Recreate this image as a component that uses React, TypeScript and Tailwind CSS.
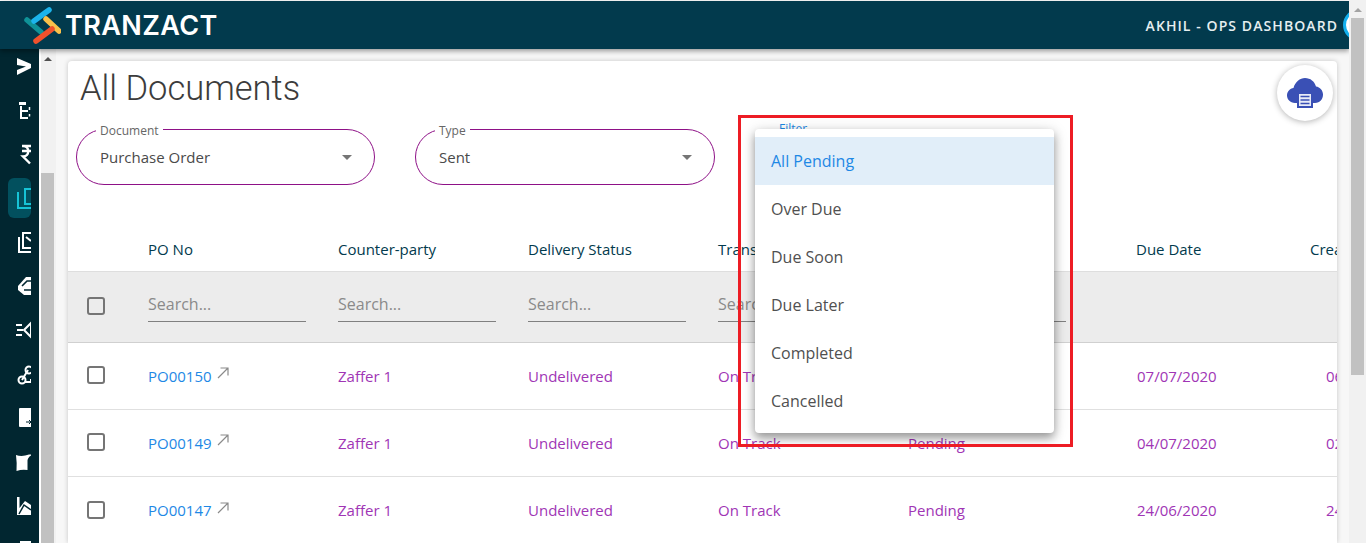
import React from "react";

const FONT = "font-['Open_Sans',sans-serif]";

function Logo() {
  return (
    <svg width="38" height="40" viewBox="0 0 38 40" fill="none" strokeLinecap="round" className="shrink-0">
      <path d="M4 15 L18 27" stroke="#0f9298" strokeWidth="5.5" />
      <path d="M11 16 L26 5" stroke="#1cb4ec" strokeWidth="5.5" />
      <path d="M23 14 L36 26" stroke="#f9c04a" strokeWidth="5.5" />
      <path d="M13 36 L29 24" stroke="#f0512c" strokeWidth="5.5" />
    </svg>
  );
}

function SideIcon({ children, active }: { children: React.ReactNode; active?: boolean }) {
  return (
    <div className="flex h-[44px] shrink-0 items-center">
      <div className={`relative h-[40px] w-[23px] overflow-hidden ${active ? "rounded-md bg-[#02505e]" : ""}`}>
        <svg width="32" height="40" viewBox="0 0 32 40" className="absolute left-0 top-0" fill="none">
          {children}
        </svg>
      </div>
    </div>
  );
}

function Sidebar() {
  const w = "#ffffff";
  const d = "#012630";
  return (
    <div className="flex h-full w-[39px] shrink-0 flex-col overflow-hidden bg-[#012630] pl-[8px]">
      <div className="mt-[-5px]" />
      <SideIcon>
        <path d="M9 12 L23 18 V22 L9 29 V24 L18 20.5 L9 19 Z" fill={w} />
      </SideIcon>
      <SideIcon>
        <path d="M11 12 H18 V15 H11 Z" fill={w} />
        <path d="M13 16 V28 H20 M13 21 H20" stroke={w} strokeWidth="2" />
        <path d="M21.5 17 V20 M21.5 24 V26.5" stroke={w} strokeWidth="1.5" />
      </SideIcon>
      <SideIcon>
        <path d="M14 12 H23 M14 17 H23 M15 12 C22 12 22 22.5 15 22.5 L22 29.5" stroke={w} strokeWidth="2.4" />
      </SideIcon>
      <SideIcon active>
        <path d="M10 14 V30 H23" stroke="#17c3d6" strokeWidth="2" />
        <path d="M17 11 H30 V26 H17 Z" stroke="#17c3d6" strokeWidth="2" />
      </SideIcon>
      <SideIcon>
        <path d="M11 15 V30 H23" stroke={w} strokeWidth="2" />
        <path d="M15 11 H27 V26 H15 Z" stroke={w} strokeWidth="2" />
        <path d="M18 15 L23 19" stroke={w} strokeWidth="2" />
      </SideIcon>
      <SideIcon>
        <path d="M10 20 L18 11 H23 V29 H16 L10 24 Z" fill={w} />
        <path d="M14 20 L19 15 H23 M16 24 H23" stroke={d} strokeWidth="1.6" />
      </SideIcon>
      <SideIcon>
        <path d="M8 15 H14 M9 20 H15 M8 25 H14" stroke={w} strokeWidth="1.8" />
        <path d="M16 20 L23 13 V27 Z" stroke={w} strokeWidth="2" />
      </SideIcon>
      <SideIcon>
        <circle cx="14" cy="26" r="3.5" stroke={w} strokeWidth="2" />
        <circle cx="21" cy="16" r="3.5" stroke={w} strokeWidth="2" />
        <path d="M14 26 L20 16 M17 28 H23 M23 25 V29" stroke={w} strokeWidth="2" />
      </SideIcon>
      <SideIcon>
        <path d="M12 10 H23 V29 H12 Q11 29 11 28 V11 Q11 10 12 10 Z" fill={w} />
        <path d="M18 24 H23 M21 22 L23 24 L21 26" stroke={d} strokeWidth="1" />
      </SideIcon>
      <SideIcon>
        <path d="M8 13 Q14 15 21 12.5 H23 V13.5 Q19 16 19.5 20 V28 Q14 27 8.5 29 Q9 20 8 13 Z" fill={w} />
      </SideIcon>
      <SideIcon>
        <path d="M9 11 H11.5 V22 L17 15 L23 19 V29 H9 Z" fill={w} />
        <path d="M11 28 L16 19 L23 24" stroke={d} strokeWidth="1.5" />
      </SideIcon>
      <SideIcon>
        <path d="M12 11 H23 V30 H12 Z" fill={w} />
      </SideIcon>
    </div>
  );
}

function Field({ label, value, className }: { label: string; value: string; className: string }) {
  return (
    <div className={`relative flex h-[56px] items-center justify-between rounded-[28px] border border-[#8e1187] pl-[23px] pr-[22px] ${className}`}>
      <span className="absolute left-[19px] top-[-6px] bg-white px-[4px] text-[12px] leading-[14px] text-[#666666]">{label}</span>
      <span className="text-[15px] text-[#4a4a4a]">{value}</span>
      <span className="mt-[1px] h-0 w-0 border-x-[5px] border-t-[5px] border-x-transparent border-t-[#757575]" />
    </div>
  );
}

const COLS = ["w-[190px]", "w-[190px]", "w-[190px]", "w-[190px]", "w-[228px]", "w-[190px]"];

function Checkbox() {
  return <span className="mt-[-2px] block h-[18px] w-[18px] rounded-[3px] border-2 border-[#757575]" />;
}

function Search() {
  return (
    <div className="flex h-[34px] w-[158px] items-center border-b border-[#808080] pb-[2px] text-[16px] text-[#8a8a8a]">Search...</div>
  );
}

function Row({ cells, last }: { cells: string[]; last?: boolean }) {
  return (
    <div className={`flex h-[67px] shrink-0 items-center text-[15px] text-[#a035b5] ${last ? "" : "border-b border-[#e0e0e0]"}`}>
      <div className="w-[80px] shrink-0 pl-[19px]"><Checkbox /></div>
      <div className={`${COLS[0]} flex shrink-0 items-center text-[#1e88e5]`}>
        <span>{cells[0]}</span>
        <svg width="12" height="12" viewBox="0 0 12 12" fill="none" stroke="#8a8a8a" strokeWidth="1.2" className="ml-[5px] mt-[-6px]">
          <path d="M1 11 L11 1 M3.5 1 H11 V8.5" />
        </svg>
      </div>
      {cells.slice(1).map((c, i) => (
        <div key={i} className={`${COLS[i + 1]} shrink-0 ${i === 4 ? "pl-[1px]" : ""}`}>{c}</div>
      ))}
    </div>
  );
}

function Table() {
  const heads = ["PO No", "Counter-party", "Delivery Status", "Transaction Status", "Status", "Due Date", "Created"];
  return (
    <div className="mt-[41px] flex flex-col overflow-hidden">
      <div className="flex h-[46px] shrink-0 items-center border-b border-[#dedede] pl-[80px] pt-[2px] text-[15px] font-medium text-[#023a4d]">
        {heads.map((h, i) => (
          <div key={h} className={`${i === 4 ? "w-[228px]" : i === 5 ? "w-[174px]" : "w-[190px]"} shrink-0 whitespace-nowrap`}>{h}</div>
        ))}
      </div>
      <div className="flex h-[71px] shrink-0 items-center border-b border-[#d0d0d0] bg-[#ececec]">
        <div className="w-[80px] shrink-0 pl-[19px]"><Checkbox /></div>
        {[0, 1, 2, 3, 4].map((i) => (
          <div key={i} className={`${COLS[i]} mt-[-4px] shrink-0`}><Search /></div>
        ))}
      </div>
      <Row cells={["PO00150", "Zaffer 1", "Undelivered", "On Track", "Pending", "07/07/2020", "06/07/2020"]} />
      <Row cells={["PO00149", "Zaffer 1", "Undelivered", "On Track", "Pending", "04/07/2020", "02/07/2020"]} />
      <Row last cells={["PO00147", "Zaffer 1", "Undelivered", "On Track", "Pending", "24/06/2020", "24/06/2020"]} />
    </div>
  );
}

function Menu() {
  const items = ["All Pending", "Over Due", "Due Soon", "Due Later", "Completed", "Cancelled"];
  return (
    <div className="absolute left-[755px] top-[129px] z-10 w-[299px] rounded-[4px] bg-white py-[8px] shadow-[0_5px_10px_rgba(0,0,0,0.35),0_2px_16px_rgba(0,0,0,0.14)]">
      {items.map((t, i) => (
        <div key={t} className={`flex h-[48px] items-center pl-[16px] text-[16px] ${i === 0 ? "bg-[#e1eef9] text-[#1e88e5]" : "text-[#505050]"}`}>{t}</div>
      ))}
    </div>
  );
}

export default function App() {
  return (
    <div className={`relative flex h-[543px] w-[1366px] overflow-hidden bg-white ${FONT}`}>
      <div className="flex min-w-0 flex-1 flex-col pt-[1px]">
        <header className="relative z-[5] flex h-[48px] shrink-0 items-center overflow-hidden bg-[#023a4d] pl-[23px] shadow-[0_2px_5px_rgba(0,0,0,0.4)]">
          <Logo />
          <span className="ml-[4px] font-['Inter',sans-serif] text-[27px] font-semibold leading-none tracking-[0.4px] text-white">TRANZACT</span>
          <div className="ml-auto flex items-center">
            <span className="text-[14px] font-semibold tracking-[1.08px] text-[#e6eef0]">AKHIL - OPS DASHBOARD</span>
            <span className="ml-[5px] mr-[-26px] h-[32px] w-[32px] rounded-full border-[3px] border-[#13b0ee] bg-white" />
          </div>
        </header>
        <div className="flex min-h-0 flex-1">
          <Sidebar />
          <div className="h-full w-[2px] shrink-0 bg-white" />
          <div className="flex h-full w-[15px] shrink-0 flex-col bg-[#f1f1f1]">
            <span className="ml-[3px] mt-[8px] h-0 w-0 border-x-[4px] border-b-[4px] border-x-transparent border-b-[#505050]" />
            <div className="mt-[112px] h-full w-[13px] bg-[#c1c1c1]" />
          </div>
          <div className="flex min-w-0 flex-1 bg-[#f7f7f7] px-[12px] pt-[12px]">
            <main className="relative min-w-0 flex-1 overflow-hidden rounded-t-[4px] bg-white shadow-[0_0_5px_rgba(0,0,0,0.2)]">
              <h1 className="pl-[12px] pt-[7px] font-['Roboto',sans-serif] text-[34.5px] font-light leading-[40px] text-[#3c3c3c]">All Documents</h1>
              <div className="mt-[21px] flex pl-[8px]">
                <Field label="Document" value="Purchase Order" className="w-[299px]" />
                <Field label="Type" value="Sent" className="ml-[40px] w-[300px]" />
                <div className="relative ml-[40px] h-[56px] w-[299px]">
                  <span className="absolute left-[24px] top-[-7px] text-[12px] leading-[14px] text-[#1e88e5]">Filter</span>
                </div>
              </div>
              <div className="absolute right-[4px] top-[4px] flex h-[56px] w-[56px] items-center justify-center rounded-full bg-white shadow-[0_1px_6px_rgba(0,0,0,0.3)]">
                <svg width="36" height="30" viewBox="0 0 36 30">
                  <path d="M8 25 C3 25 0 21 0 17.5 C0 13.5 3 10.5 6.5 10 C8 4 13 0 18 0 C23.5 0 27.5 3.5 29 8.5 C33 9 36 12.5 36 16.5 C36 21 33 25 28 25 Z" fill="#3a50b5" />
                  <rect x="10" y="14" width="16" height="16" fill="#3a50b5" />
                  <rect x="12" y="16" width="12" height="12" fill="#e8ebf7" />
                  <path d="M13.5 18.5 H22.5 M13.5 22 H22.5 M13.5 25.5 H22.5" stroke="#3a50b5" strokeWidth="1.3" />
                </svg>
              </div>
              <Table />
            </main>
          </div>
        </div>
      </div>
      <div className="z-[6] flex h-full w-[17px] shrink-0 flex-col items-center bg-[#f1f1f1]">
        <span className="mt-[8px] h-0 w-0 border-x-[4px] border-b-[4px] border-x-transparent border-b-[#a3a3a3]" />
        <div className="mt-[6px] h-[357px] w-[13px] bg-[#c1c1c1]" />
      </div>
      <Menu />
      <div className="absolute left-[738px] top-[115px] z-20 h-[332px] w-[335px] border-[3px] border-[#ed1c24]" />
    </div>
  );
}
